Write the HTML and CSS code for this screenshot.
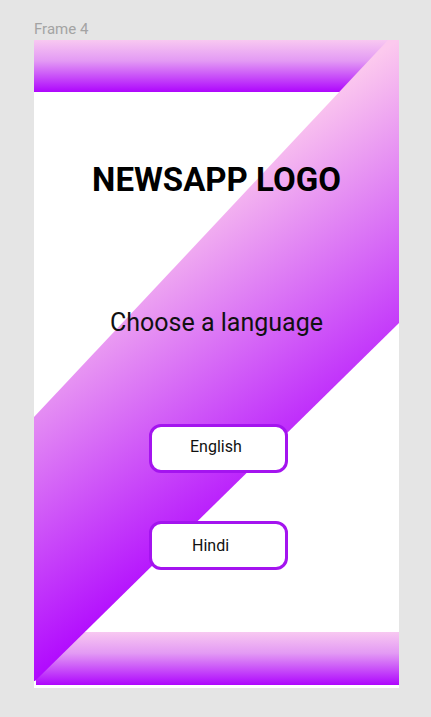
FILE: index.html
```html
<!DOCTYPE html>
<html lang="en">
<head>
<meta charset="utf-8">
<title>Frame 4</title>
<link rel="stylesheet" href="styles.css">
</head>
<body>
  <div class="canvas">
    <div class="frame-label">Frame 4</div>
    <div class="frame">
      <svg class="band" viewBox="0 0 365 648" width="365" height="648" aria-hidden="true">
        <defs>
          <linearGradient id="bandGrad" gradientUnits="userSpaceOnUse" x1="120" y1="171" x2="310" y2="442">
            <stop offset="0" stop-color="#fcc9ee"/>
            <stop offset="1" stop-color="#ad00ff"/>
          </linearGradient>
        </defs>
        <polygon points="354,0 365,0 365,283 1,641 0,641 0,377" fill="url(#bandGrad)"/>
      </svg>
      <div class="bar bar-top"></div>
      <div class="content">
        <h1 class="logo">NEWSAPP LOGO</h1>
        <p class="prompt">Choose a language</p>
        <div class="choices">
          <button class="lang lang-en">English</button>
          <button class="lang lang-hi">Hindi</button>
        </div>
      </div>
      <div class="bar bar-bottom"></div>
    </div>
  </div>
</body>
</html>
```

FILE: styles.css
```css
html, body {
  margin: 0;
  padding: 0;
}

body {
  background: #e5e5e5;
  width: 431px;
  height: 717px;
  overflow: hidden;
  font-family: Roboto, "Liberation Sans", sans-serif;
}

.canvas {
  padding: 20px 0 0 34px;
}

.frame-label {
  font-family: Roboto, "Liberation Sans", sans-serif;
  font-size: 15px;
  line-height: 18px;
  height: 20px;
  color: #a3a3a3;
}

.frame {
  position: relative;
  width: 365px;
  height: 648px;
  background: #ffffff;
  display: flex;
  flex-direction: column;
}

.band {
  position: absolute;
  left: 0;
  top: 0;
  z-index: 1;
}

.bar {
  height: 52px;
  flex: none;
  background: linear-gradient(to bottom, #f8c8f1 0%, #e39af4 40%, #ae06fd 100%);
}

.bar-bottom {
  margin-left: 2px;
  margin-bottom: 3px;
  height: 53px;
}

.content {
  position: relative;
  z-index: 2;
  flex: 1;
  display: flex;
  flex-direction: column;
}

.logo {
  margin: 68px 0 0 0;
  font-family: Roboto, "Liberation Sans", sans-serif;
  font-weight: 700;
  font-size: 33px;
  line-height: 40px;
  color: #000;
  text-align: center;
}

.prompt {
  margin: 108px 0 0 0;
  font-size: 25px;
  line-height: 30px;
  color: #111;
  text-align: center;
}

.choices {
  margin-top: 86px;
  margin-left: 115px;
  display: flex;
  flex-direction: column;
  align-items: flex-start;
  gap: 48px;
}

.lang {
  box-sizing: border-box;
  width: 139px;
  height: 49px;
  border: 3px solid #a414ef;
  border-radius: 12px;
  background: #ffffff;
  font-family: Roboto, "Liberation Sans", sans-serif;
  font-size: 16px;
  color: #111;
  text-align: left;
  padding: 0;
  margin: 0;
}

.lang-en {
  padding-left: 38px;
  padding-bottom: 5px;
}

.lang-hi {
  padding-left: 40px;
}
```
